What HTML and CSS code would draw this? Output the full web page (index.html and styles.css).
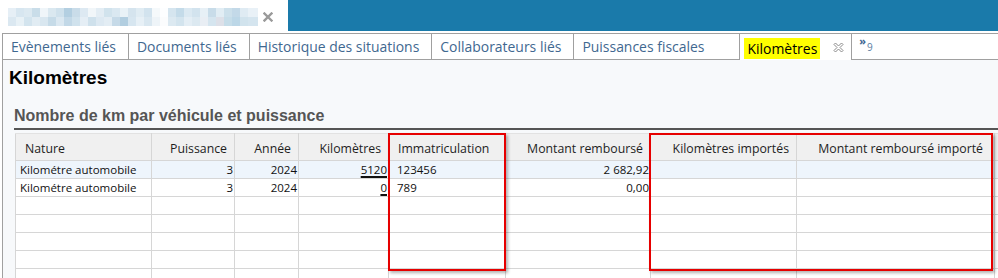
FILE: index.html
```html
<!DOCTYPE html>
<html>
<head>
  <title>Kilomètres</title>
  <link rel="stylesheet" href="styles.css">
</head>
<body>
  <div class="titlebar">
    <div class="doc-tab">
      <div class="doc-name">
        <span class="mosaic row-a"></span>
        <span class="mosaic row-b"></span>
      </div>
      <svg class="doc-close" viewBox="0 0 10 10" width="10" height="10">
        <path d="M1.5 1.5 L8.5 8.5 M8.5 1.5 L1.5 8.5" stroke="#9a9a9a" stroke-width="2.4" stroke-linecap="square"/>
      </svg>
    </div>
    <div class="titlebar-fill"></div>
  </div>

  <div class="workspace">
    <div class="tabs">
      <div class="tab">Evènements liés</div>
      <div class="tab">Documents liés</div>
      <div class="tab">Historique des situations</div>
      <div class="tab">Collaborateurs liés</div>
      <div class="tab last">Puissances fiscales</div>
      <div class="tab active">
        <span class="highlight">Kilomètres</span>
        <!-- hollow close cross -->
        <svg class="tab-close" viewBox="0 0 11 11" width="11" height="11">
          <path d="M1 2.5 L2.5 1 L5.5 4 L8.5 1 L10 2.5 L7 5.5 L10 8.5 L8.5 10 L5.5 7 L2.5 10 L1 8.5 L4 5.5 Z" fill="#fff" stroke="#8a8a8a" stroke-width="1"/>
        </svg>
      </div>
      <div class="more">»<span class="more-count">9</span></div>
    </div>

    <div class="page">
      <h1>Kilomètres</h1>
      <h2>Nombre de km par véhicule et puissance</h2>

      <div class="grid-wrap">
        <table class="grid">
          <colgroup>
            <col class="c-nature">
            <col class="c-puiss">
            <col class="c-annee">
            <col class="c-km">
            <col class="c-immat">
            <col class="c-montant">
            <col class="c-kmimp">
            <col class="c-montimp">
            <col class="c-fill">
          </colgroup>
          <thead>
            <tr>
              <th class="left">Nature</th>
              <th>Puissance</th>
              <th>Année</th>
              <th>Kilomètres</th>
              <th class="left">Immatriculation</th>
              <th>Montant remboursé</th>
              <th>Kilomètres importés</th>
              <th class="wide">Montant remboursé importé</th>
              <th></th>
            </tr>
          </thead>
          <tbody>
            <tr class="selected">
              <td>Kilométre automobile</td>
              <td class="num">3</td>
              <td class="num">2024</td>
              <td class="num"><span class="edit">5120</span></td>
              <td class="immat">123456</td>
              <td class="num">2 682,92</td>
              <td></td>
              <td></td>
              <td></td>
            </tr>
            <tr>
              <td>Kilométre automobile</td>
              <td class="num">3</td>
              <td class="num">2024</td>
              <td class="num"><span class="edit">0</span></td>
              <td class="immat">789</td>
              <td class="num">0,00</td>
              <td></td>
              <td></td>
              <td></td>
            </tr>
            <tr><td></td><td></td><td></td><td></td><td></td><td></td><td></td><td></td><td></td></tr>
            <tr><td></td><td></td><td></td><td></td><td></td><td></td><td></td><td></td><td></td></tr>
            <tr><td></td><td></td><td></td><td></td><td></td><td></td><td></td><td></td><td></td></tr>
            <tr><td></td><td></td><td></td><td></td><td></td><td></td><td></td><td></td><td></td></tr>
            <tr><td></td><td></td><td></td><td></td><td></td><td></td><td></td><td></td><td></td></tr>
          </tbody>
        </table>
        <!-- red highlight frames drawn over the grid -->
        <div class="frame frame-immat"></div>
        <div class="frame frame-import"></div>
      </div>
    </div>
  </div>
</body>
</html>
```

FILE: styles.css
```css
body {
  margin: 0;
  height: 278px;
  overflow: hidden;
  background: #fff;
  font-family: "Open Sans", "Noto Sans", sans-serif;
}

/* title strip */
.titlebar {
  display: flex;
  height: 31px;
}
.doc-tab {
  width: 280px;
  padding: 8px 0 0 8px;
  display: flex;
  gap: 5px;
  background: #fff;
}
.doc-name {
  width: 250px;
  height: 18px;
  display: flex;
  flex-direction: column;
}
.mosaic {
  display: block;
  height: 9px;
}
.row-a {
  background: linear-gradient(90deg,
    #e6eff6 0 8px, #d7e6f0 8px 16px, #dce9f1 16px 24px, #c9dde9 24px 32px,
    #eff5f9 32px 40px, #dae8f0 40px 48px, #cfe1ec 48px 56px, #b3cfe1 56px 64px,
    #c9dce9 64px 72px, #dde9f2 72px 80px, #f1f6f9 80px 88px, #e3edf4 88px 96px,
    #d1e3ed 96px 104px, #dae8f1 104px 112px, #e9f2f7 112px 120px, #d5e4ee 120px 128px,
    #e0ecf3 128px 136px, #d2e3ee 136px 144px, #f5f9fb 144px 152px, #fdfeff 152px 160px,
    #d5e5ef 160px 168px, #c4dbe9 168px 176px, #dbe9f2 176px 184px, #d2e3ee 184px 192px,
    #e7f0f6 192px 200px, #c8dce9 200px 208px, #e1edf4 208px 216px, #cce0eb 216px 224px,
    #c3d9e8 224px 232px, #dfebf3 232px 240px, #e9f1f7 240px 250px);
}
.row-b {
  background: linear-gradient(90deg,
    #dbe8f1 0 8px, #e8f1f6 8px 16px, #d3e4ee 16px 24px, #e1ecf3 24px 32px,
    #d9e7f0 32px 40px, #c6dbe8 40px 48px, #dbe8f1 48px 56px, #c2d8e7 56px 64px,
    #d0e2ed 64px 72px, #e5eef5 72px 80px, #cfe1ec 80px 88px, #dde9f2 88px 96px,
    #e3edf4 96px 104px, #c6dae8 104px 112px, #b2cee0 112px 120px, #d7e6f0 120px 128px,
    #e7f0f6 128px 136px, #d9e7f0 136px 144px, #eef4f8 144px 152px, #fbfcfd 152px 160px,
    #dce9f1 160px 168px, #d3e4ee 168px 176px, #e4eef5 176px 184px, #dce9f1 184px 192px,
    #e9eef4 192px 200px, #d5e5ef 200px 208px, #dde0e8 208px 216px, #c6dde9 216px 224px,
    #bcd7e7 224px 232px, #d1e3ed 232px 240px, #d5e5ef 240px 250px);
}
.doc-close {
  margin-top: 4px;
}
.titlebar-fill {
  flex: 1;
  background: #1a7aaa;
}

/* editor area */
.workspace {
  margin: 2px 0 0 2px;
  border-left: 1px solid #a0a0a0;
  height: 245px;
  overflow: hidden;
  background: #f7f9fb;
}
.tabs {
  display: flex;
  height: 25px;
  border-top: 1px solid #a0a0a0;
  border-bottom: 1px solid #a0a0a0;
  background: #fff;
  font-size: 13.95px;
}
.tab {
  padding: 1px 12px 0 8px;
  line-height: 24px;
  border-right: 1px solid #a0a0a0;
  color: #3f6890;
  white-space: nowrap;
}
.tab.last {
  border-right: none;
  margin-right: 23px;
}
.tab.active {
  display: flex;
  align-items: flex-start;
  padding: 4px 7px 0 4px;
  border-left: 1px solid #a0a0a0;
  color: #000;
  background: #fff;
  height: 22px;
  margin-bottom: -1px;
}
.highlight {
  background: #ffff00;
  padding: 0 3px;
  line-height: 21px;
}
.tab-close {
  margin: 4px 0 0 13px;
}
.more {
  padding: 2px 0 0 7px;
  font-size: 11px;
  line-height: 10px;
  color: #3d6591;
  font-weight: bold;
}
.more-count {
  display: inline-block;
  font-size: 10px;
  font-weight: normal;
  color: #5c7fa3;
  margin: 6px 0 0 1px;
  vertical-align: top;
}

/* page content */
.page {
  padding: 7px 0 0 6px;
}
h1 {
  margin: 0;
  font: bold 19px/22px "Liberation Sans", Arial, sans-serif;
  color: #000;
}
h2 {
  margin: 17px 0 0 5px;
  padding-bottom: 2px;
  font: bold 16px/20px "Liberation Sans", Arial, sans-serif;
  color: #555;
  border-bottom: 2px solid #555;
}
.grid-wrap {
  position: relative;
  margin: 3px 0 0 6px;
}
.grid {
  border-collapse: collapse;
  table-layout: fixed;
  width: 1000px;
  background: #fff;
  border-left: 1px solid #a9a9a9;
}
.c-nature { width: 136px; }
.c-puiss { width: 83px; }
.c-annee { width: 64px; }
.c-km { width: 90px; }
.c-immat { width: 117px; }
.c-montant { width: 145px; }
.c-kmimp { width: 146px; }
.c-montimp { width: 198px; }
.c-fill { width: 21px; }

.grid th {
  height: 24px;
  padding: 2px 7px 0 7px;
  background: #f0f0f0;
  border: 1px solid #d6d6d6;
  border-top-color: #e2e2e2;
  font-size: 12.3px;
  font-weight: normal;
  color: #1e1e1e;
  text-align: right;
  white-space: nowrap;
  overflow: hidden;
}
.grid th.left {
  text-align: left;
  padding-left: 9px;
}
.grid th.wide {
  padding-right: 11px;
}
.grid td {
  height: 17px;
  padding: 0 1px 0 4px;
  border: 1px solid #d6d6d6;
  font-size: 11.5px;
  line-height: 16px;
  color: #111;
  white-space: nowrap;
  overflow: hidden;
}
.grid td.num {
  text-align: right;
}
.grid td.immat {
  padding-left: 8px;
}
.grid tr.selected td {
  background: #eef5fc;
}
.edit {
  text-decoration: underline;
  text-decoration-thickness: 2px;
  text-underline-offset: 2px;
}

.frame {
  position: absolute;
  top: 0;
  height: 134px;
  border: 2px solid #e60000;
  box-shadow: 2px 2px 3px rgba(0, 0, 0, 0.3);
}
.frame-immat {
  left: 373px;
  width: 114px;
}
.frame-import {
  left: 634px;
  width: 340px;
}
```
